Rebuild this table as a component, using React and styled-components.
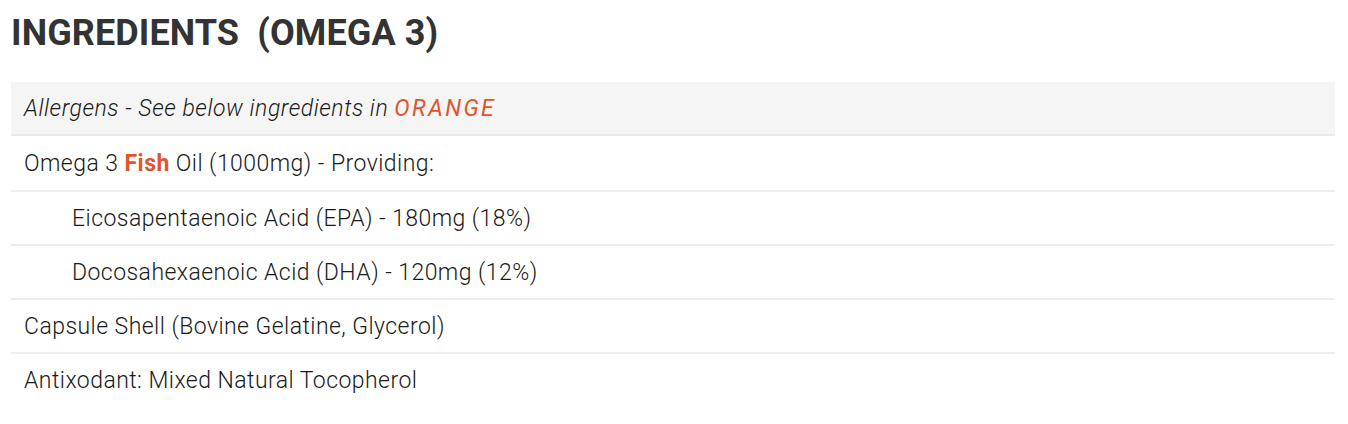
import React from 'react';
import styled, { createGlobalStyle } from 'styled-components';

const GlobalStyle = createGlobalStyle`
  body {
    margin: 0;
    background: #fff;
    font-family: Roboto, "Liberation Sans", sans-serif;
  }
`;

const rows = [
  { text: <>Omega 3 <Allergen>Fish</Allergen> Oil (1000mg) - Providing:</>, tall: true },
  { text: 'Eicosapentaenoic Acid (EPA) - 180mg (18%)', indent: true },
  { text: 'Docosahexaenoic Acid (DHA) - 120mg (12%)', indent: true },
  { text: 'Capsule Shell (Bovine Gelatine, Glycerol)' },
  { text: 'Antixodant: Mixed Natural Tocopherol', last: true },
];

function Allergen({ children }) {
  return <Orange>{children}</Orange>;
}

const App = () => {
  return (
    <Page>
      <GlobalStyle />
      <Title>INGREDIENTS&nbsp; (OMEGA 3)</Title>
      <Table>
        <HeadRow>
          Allergens - See below ingredients in <OrangeNote>ORANGE</OrangeNote>
        </HeadRow>
        {rows.map((r, i) => (
          <Row key={i} $indent={r.indent} $tall={r.tall} $last={r.last}>
            {r.text}
          </Row>
        ))}
      </Table>
    </Page>
  );
};

const Page = styled.div`
  padding: 12px 13px 0 11px;
`;

const Title = styled.h2`
  margin: 0 0 28px 0;
  font-family: Roboto, "Liberation Sans", sans-serif;
  font-weight: 700;
  font-size: 36px;
  line-height: 42px;
  letter-spacing: 0.1px;
  color: #333;
`;

const Table = styled.div`
  display: flex;
  flex-direction: column;
`;

const HeadRow = styled.div`
  display: flex;
  align-items: center;
  height: 52px;
  padding-left: 13px;
  background: #f5f5f5;
  border-bottom: 2px solid #e9e9e9;
  font-style: italic;
  font-weight: 300;
  font-size: 23px;
  letter-spacing: 0.55px;
  color: #1a1a1a;
  white-space: pre;
`;

const Row = styled.div`
  display: flex;
  align-items: center;
  height: ${p => (p.$tall ? '54px' : '52px')};
  padding-left: ${p => (p.$indent ? '61px' : '13px')};
  border-bottom: ${p => (p.$last ? 'none' : '2px solid #ededed')};
  font-size: 23px;
  font-weight: 300;
  letter-spacing: 0.45px;
  color: #1a1a1a;
  white-space: pre;
`;

const Orange = styled.span`
  color: #e0552a;
  font-weight: 700;
`;

const OrangeNote = styled.span`
  color: #e0552a;
  font-weight: 400;
  letter-spacing: 2.4px;
`;

export default App;
